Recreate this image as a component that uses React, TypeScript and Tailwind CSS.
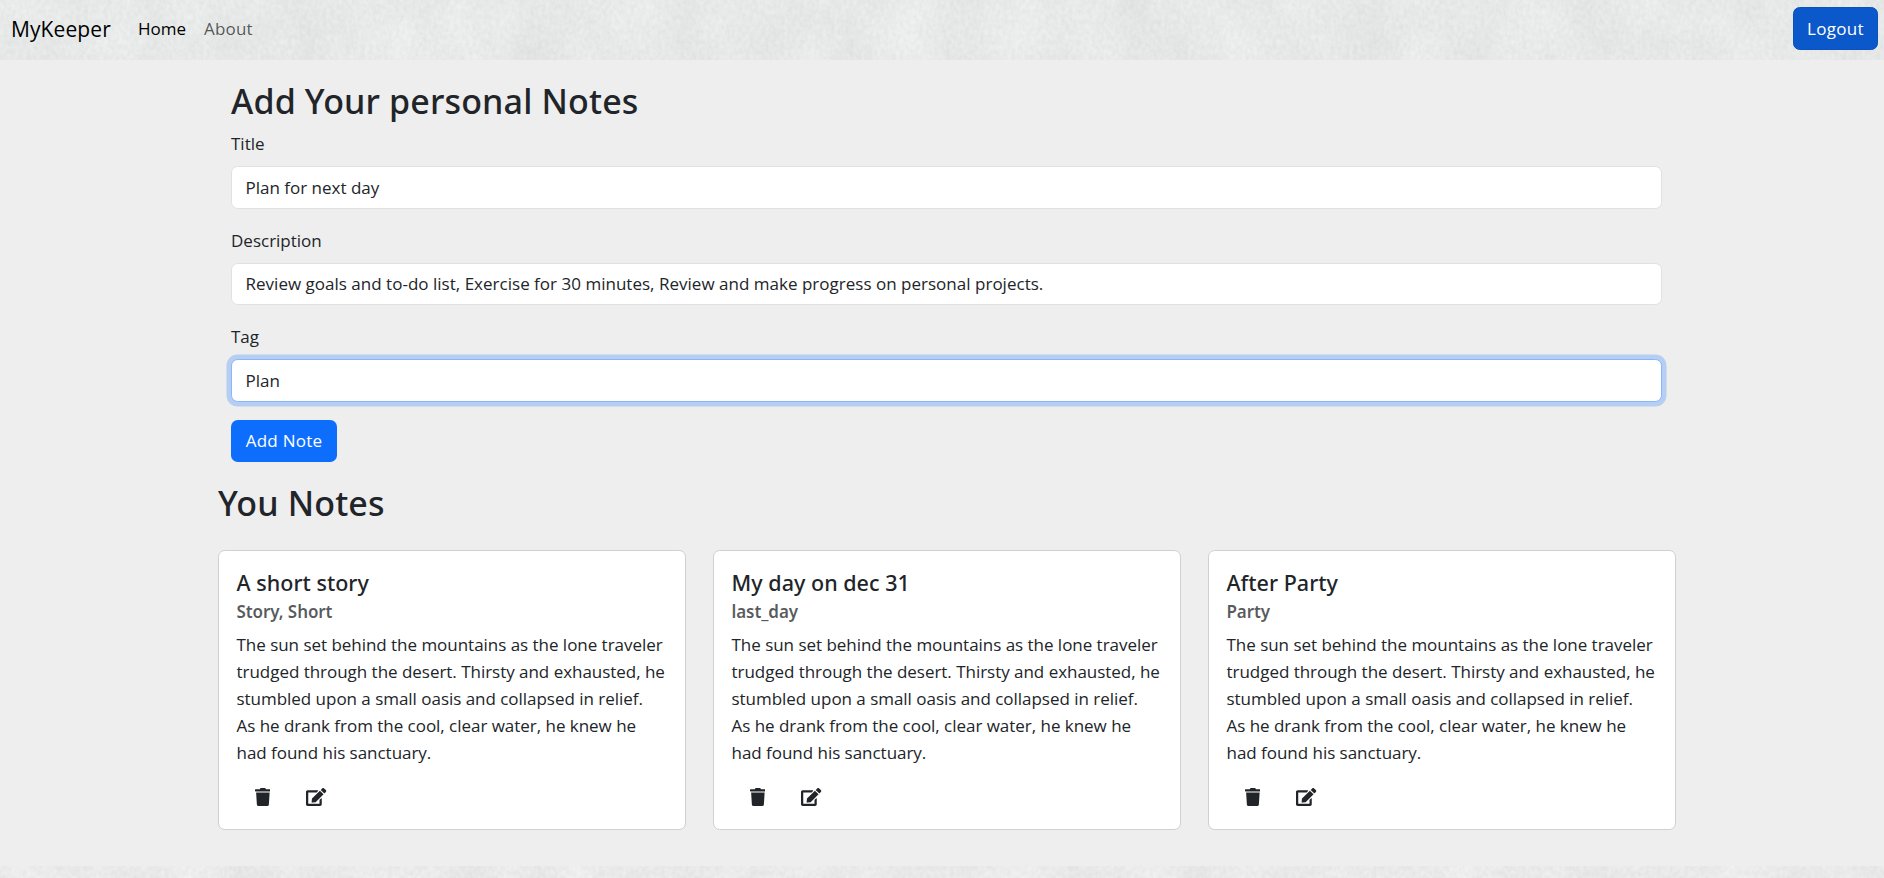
import { FaEdit, FaTrash } from "react-icons/fa";

const STORY =
  "The sun set behind the mountains as the lone traveler trudged through the desert. Thirsty and exhausted, he stumbled upon a small oasis and collapsed in relief. As he drank from the cool, clear water, he knew he had found his sanctuary.";

const NOTES = [
  { title: "A short story", tag: "Story, Short" },
  { title: "My day on dec 31", tag: "last_day" },
  { title: "After Party", tag: "Party" },
];

/* Rough plaster surface: fine grain laid over broad, slow blotches. */
function Plaster({ id, tint, seed }: { id: string; tint: string; seed: number }) {
  return (
    <svg className="absolute inset-0 h-full w-full" aria-hidden="true">
      <filter id={id} x="0" y="0" width="100%" height="100%" colorInterpolationFilters="sRGB">
        <feTurbulence type="fractalNoise" baseFrequency="0.26 0.2" numOctaves="2" seed={seed} />
        <feColorMatrix values="1 0 0 0 0  1 0 0 0 0  1 0 0 0 0  0 0 0 0 1" result="grain" />
        <feTurbulence type="fractalNoise" baseFrequency="0.018 0.014" numOctaves="4" seed={seed + 4} />
        <feColorMatrix values="1 0 0 0 0  1 0 0 0 0  1 0 0 0 0  0 0 0 0 1" result="blotch" />
        <feComposite in="grain" in2="blotch" operator="arithmetic" k1="0" k2="0.06" k3="0.06" k4="0.88" />
        <feColorMatrix values={tint} />
      </filter>
      <rect width="100%" height="100%" filter={`url(#${id})`} />
    </svg>
  );
}

function Header() {
  return (
    <header className="relative h-[60px] overflow-hidden bg-[#e6e8e8]">
      <Plaster id="plaster-top" seed={3} tint="0.963 0 0 0 0  0 0.969 0 0 0  0 0 0.969 0 0  0 0 0 1 0" />
      <nav className="relative flex h-[57px] items-center pr-1.5 pl-[11px]">
        <a className="w-[127px] text-[21px] leading-[34px] tracking-[0.1px] text-black">MyKeeper</a>
        <a className="w-[66px] text-black">Home</a>
        <a className="tracking-[0.2px] text-black/65">About</a>
        <button className="ml-auto h-[43px] w-[85px] rounded-[6.75px] border border-[#0a53be] bg-[#0a58ca] tracking-[0.3px] text-white">
          Logout
        </button>
      </nav>
    </header>
  );
}

function Field({ label, value, box }: { label: string; value: string; box: string }) {
  return (
    <div className="mb-[18px]">
      <label className="mb-[9px] block">{label}</label>
      <div className={`flex items-center rounded-[6.75px] border bg-white px-[13.5px] ${box}`}>{value}</div>
    </div>
  );
}

function NoteCard({ title, tag }: { title: string; tag: string }) {
  return (
    <article className="h-[280px] rounded-[6.75px] border border-[#d0d0d0] bg-white p-[18px] pl-[17.5px]">
      <h5 className="mb-[5px] font-['Noto_Sans',sans-serif] text-[21.5px] leading-[27px] font-medium tracking-[0.03px]">{title}</h5>
      <h6 className="mb-2 font-['Noto_Sans',sans-serif] leading-[22px] font-semibold tracking-[-0.08px] text-[#212529]/75">{tag}</h6>
      <p className="w-[429px] tracking-[-0.03px]">{STORY}</p>
      <div className="mt-[22px] flex">
        <FaTrash className="mr-[17.5px] ml-[18px] h-[18px] w-[15.75px]" />
        <FaEdit className="mx-[18.5px] h-[18px] w-[20.25px]" />
      </div>
    </article>
  );
}

export default function App() {
  return (
    <div className="flex h-[878px] flex-col overflow-hidden bg-[#eeeeee] font-['Open_Sans',sans-serif] text-[17px] leading-[27px] text-[#212529]">
      <Header />
      <main className="ml-[218px] h-[806px] w-[1458px] shrink-0 pt-5">
        <section className="mr-3.5 ml-[13px]">
          <h2 className="mb-[7px] font-['Noto_Sans',sans-serif] text-[34px] leading-[43px] font-medium tracking-[0.15px]">
            Add Your personal Notes
          </h2>
          <Field label="Title" value="Plan for next day" box="h-[43px] border-[#dee2e6]" />
          <Field
            label="Description"
            value="Review goals and to-do list, Exercise for 30 minutes, Review and make progress on personal projects."
            box="h-[42px] border-[#dee2e6] pb-px tracking-[0.015px]"
          />
          <Field
            label="Tag"
            value="Plan"
            box="h-[43px] border-[#86b7fe] shadow-[0_0_0_4.5px_rgba(13,110,253,0.25)]"
          />
          <button className="block h-[42px] w-[106px] rounded-[6.75px] bg-[#0d6efd] pb-px tracking-[0.25px] text-white">
            Add Note
          </button>
        </section>
        <h2 className="mt-5 mb-[25px] font-['Noto_Sans',sans-serif] text-[34px] leading-[43px] font-medium tracking-[0.15px]">
          You Notes
        </h2>
        <section className="grid grid-cols-3 gap-[27px]">
          {NOTES.map((note) => (
            <NoteCard key={note.title} {...note} />
          ))}
        </section>
      </main>
      <footer className="relative h-3 shrink-0 overflow-hidden bg-[#e9e9e9]">
        <Plaster id="plaster-bottom" seed={11} tint="0.975 0 0 0 0  0 0.975 0 0 0  0 0 0.975 0 0  0 0 0 1 0" />
      </footer>
    </div>
  );
}
